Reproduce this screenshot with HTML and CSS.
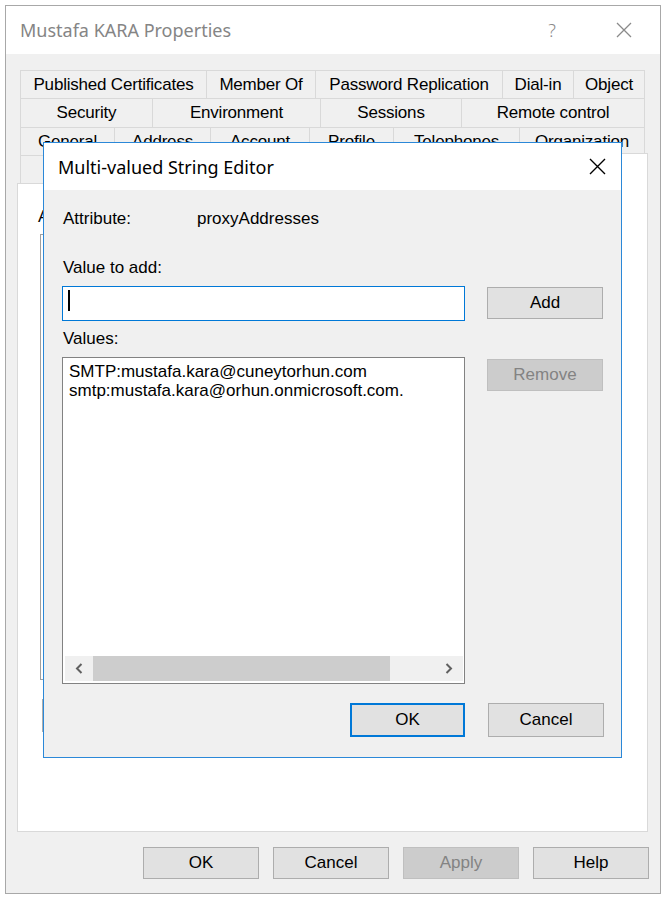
FILE: index.html
```html
<!DOCTYPE html>
<html>
<head>
<meta charset="utf-8">
<title>Mustafa KARA Properties</title>
<link rel="stylesheet" href="styles.css">
</head>
<body>
<div class="window">
  <div class="titlebar">
    <span class="title">Mustafa KARA Properties</span>
    <span class="help">?</span>
    <svg class="close" width="16" height="16" viewBox="0 0 16 16"><path d="M1 1 L15 15 M15 1 L1 15" stroke="#8a8a8a" stroke-width="1.3" fill="none"/></svg>
  </div>
  <div class="body">
    <div class="tabs">
      <div class="row r1">
        <div class="tab">Published Certificates</div>
        <div class="tab">Member Of</div>
        <div class="tab">Password Replication</div>
        <div class="tab">Dial-in</div>
        <div class="tab">Object</div>
      </div>
      <div class="row r2">
        <div class="tab">Security</div>
        <div class="tab">Environment</div>
        <div class="tab">Sessions</div>
        <div class="tab">Remote control</div>
      </div>
      <div class="row r3">
        <div class="tab">General</div>
        <div class="tab">Address</div>
        <div class="tab">Account</div>
        <div class="tab">Profile</div>
        <div class="tab">Telephones</div>
        <div class="tab">Organization</div>
      </div>
      <div class="row r4">
        <div class="tab">Remote Desktop Services Profile</div>
        <div class="tab">COM+</div>
        <div class="tab sel">Attribute Editor</div>
      </div>
    </div>
    <div class="page">
      <div class="attr-label">Attributes:</div>
      <div class="attr-list"></div>
      <div class="page-buttons">
        <div class="btn">Edit</div>
        <div class="btn">Filter</div>
      </div>
    </div>
    <div class="footer">
      <div class="btn">OK</div>
      <div class="btn">Cancel</div>
      <div class="btn disabled">Apply</div>
      <div class="btn">Help</div>
    </div>
  </div>

  <div class="dialog">
    <div class="d-titlebar">
      <span class="d-title">Multi-valued String Editor</span>
      <svg class="d-close" width="17" height="17" viewBox="0 0 17 17"><path d="M1 1 L16 16 M16 1 L1 16" stroke="#000" stroke-width="1.4" fill="none"/></svg>
    </div>
    <div class="d-body">
      <div class="d-attr">
        <span class="d-attr-name">Attribute:</span>
        <span>proxyAddresses</span>
      </div>
      <div class="d-label d-label-add">Value to add:</div>
      <div class="d-inputrow">
        <div class="d-input"><div class="caret"></div></div>
        <div class="btn d-side">Add</div>
      </div>
      <div class="d-label d-label-values">Values:</div>
      <div class="d-listrow">
        <div class="d-list">
          <div class="d-items">
            <div class="d-item">SMTP:mustafa.kara@cuneytorhun.com</div>
            <div class="d-item">smtp:mustafa.kara@orhun.onmicrosoft.com.</div>
          </div>
          <div class="hscroll">
            <div class="arrow"><svg width="8" height="11" viewBox="0 0 8 11"><path d="M6.5 1 L2 5.5 L6.5 10" stroke="#606060" stroke-width="2" fill="none"/></svg></div>
            <div class="thumb"></div>
            <div class="track"></div>
            <div class="arrow"><svg width="8" height="11" viewBox="0 0 8 11"><path d="M1.5 1 L6 5.5 L1.5 10" stroke="#606060" stroke-width="2" fill="none"/></svg></div>
          </div>
        </div>
        <div class="btn d-side d-remove disabled">Remove</div>
      </div>
      <div class="d-buttons">
        <div class="btn d-ok">OK</div>
        <div class="btn d-cancel">Cancel</div>
      </div>
    </div>
  </div>
</div>
</body>
</html>
```

FILE: styles.css
```css
* { box-sizing: border-box; }
html, body { margin: 0; padding: 0; background: #fff; }
body {
  font-family: "Liberation Sans", Arial, sans-serif;
  font-size: 17px;
  color: #000;
}

.window {
  position: relative;
  margin: 5px 0 0 5px;
  width: 656px;
  height: 889px;
  border: 1px solid #a8a8a8;
  background: #f0f0f0;
  display: flex;
  flex-direction: column;
}

.titlebar {
  height: 48px;
  flex: none;
  background: #fff;
  display: flex;
  align-items: center;
  padding-left: 14px;
}
.title {
  flex: 1;
  font-family: "Noto Sans", "Open Sans", sans-serif;
  font-size: 18px;
  color: #858585;
}
.help {
  width: 16px;
  text-align: center;
  font-family: "Noto Sans", sans-serif;
  font-size: 18px;
  font-weight: 300;
  color: #8a8a8a;
}
.close { margin: 0 28px 0 56px; }

.body {
  flex: 1;
  padding: 16px 12px 0 11px;
  display: flex;
  flex-direction: column;
}

.tabs { margin: 0 3px; }
.row { display: grid; height: 28px; }
.row.r2 { height: 29px; }
.r1 { grid-template-columns: 186px 109px 187px 71px 72px; }
.r2 { grid-template-columns: 132px 168px 141px 184px; }
.r3 { grid-template-columns: 94px 96px 99px 84px 126px 126px; }
.r4 { grid-template-columns: 320px 70px 235px; }

.tab {
  border-top: 1px solid #d9d9d9;
  border-left: 1px solid #d9d9d9;
  text-align: center;
  white-space: nowrap;
  overflow: hidden;
  line-height: 27px;
  letter-spacing: -0.2px;
}
.tab:last-child { border-right: 1px solid #d9d9d9; }
.tab.sel {
  position: relative;
  z-index: 1;
  background: #fff;
  margin: -2px -3px -1px -2px;
  line-height: 30px;
}

.page {
  height: 649px;
  flex: none;
  background: #fff;
  border: 1px solid #d9d9d9;
  padding: 23px 0 0 20px;
}
.attr-label { line-height: 20px; }
.attr-list {
  margin: 7px 0 0 2px;
  width: 560px;
  height: 446px;
  border: 1px solid #a0a0a0;
  background: #fff;
}
.page-buttons { display: flex; gap: 14px; margin: 19px 0 0 4px; }
.page-buttons .btn { height: 33px; }

.btn {
  width: 116px;
  height: 32px;
  flex: none;
  background: #e1e1e1;
  border: 1px solid #adadad;
  display: flex;
  align-items: center;
  justify-content: center;
}
.btn.disabled {
  background: #cccccc;
  border-color: #bfbfbf;
  color: #838383;
}

.footer {
  display: flex;
  justify-content: flex-end;
  gap: 14px;
  margin: 15px -1px 0 0;
}

/* dialog */
.dialog {
  position: absolute;
  left: 37px;
  top: 136px;
  width: 579px;
  height: 616px;
  z-index: 5;
  border: 1px solid #2b88d8;
  background: #f0f0f0;
  display: flex;
  flex-direction: column;
}
.d-titlebar {
  height: 47px;
  flex: none;
  background: #fff;
  display: flex;
  align-items: center;
  padding-left: 14px;
}
.d-title {
  flex: 1;
  font-family: "Noto Sans", "Open Sans", sans-serif;
  font-size: 18px;
  color: #000;
}
.d-close { margin-right: 15px; }

.d-body {
  flex: 1;
  padding: 19px 17px 0 18px;
  display: flex;
  flex-direction: column;
}
.d-attr { display: flex; line-height: 20px; padding-left: 1px; }
.d-attr-name { width: 134px; }
.d-label { line-height: 20px; padding-left: 1px; }
.d-label-add { margin-top: 29px; }
.d-label-values { margin-top: 8px; }

.d-inputrow { display: flex; margin-top: 8px; height: 35px; }
.d-input {
  width: 403px;
  height: 35px;
  background: #fff;
  border: 1px solid #0078d7;
  padding: 3px 0 0 5px;
}
.caret { width: 2px; height: 21px; background: #000; }
.d-side { margin: 1px 0 0 22px; }

.d-listrow { display: flex; margin-top: 8px; }
.d-list {
  width: 403px;
  height: 327px;
  background: #fff;
  border: 1px solid #828282;
  display: flex;
  flex-direction: column;
}
.d-items { flex: 1; padding: 4px 5px 0 6px; }
.d-item { line-height: 19px; white-space: nowrap; }
.d-remove { margin-top: 2px; }

.hscroll {
  height: 25px;
  flex: none;
  margin: 0 1px 2px 2px;
  background: #f0f0f0;
  display: flex;
}
.arrow {
  width: 28px;
  display: flex;
  align-items: center;
  justify-content: center;
}
.thumb { width: 297px; background: #cdcdcd; }
.track { flex: 1; }

.d-buttons {
  display: flex;
  justify-content: flex-end;
  gap: 23px;
  margin-top: 19px;
}
.d-ok {
  width: 115px;
  height: 34px;
  border: 2px solid #0078d7;
}
.d-cancel { height: 34px; }
```
